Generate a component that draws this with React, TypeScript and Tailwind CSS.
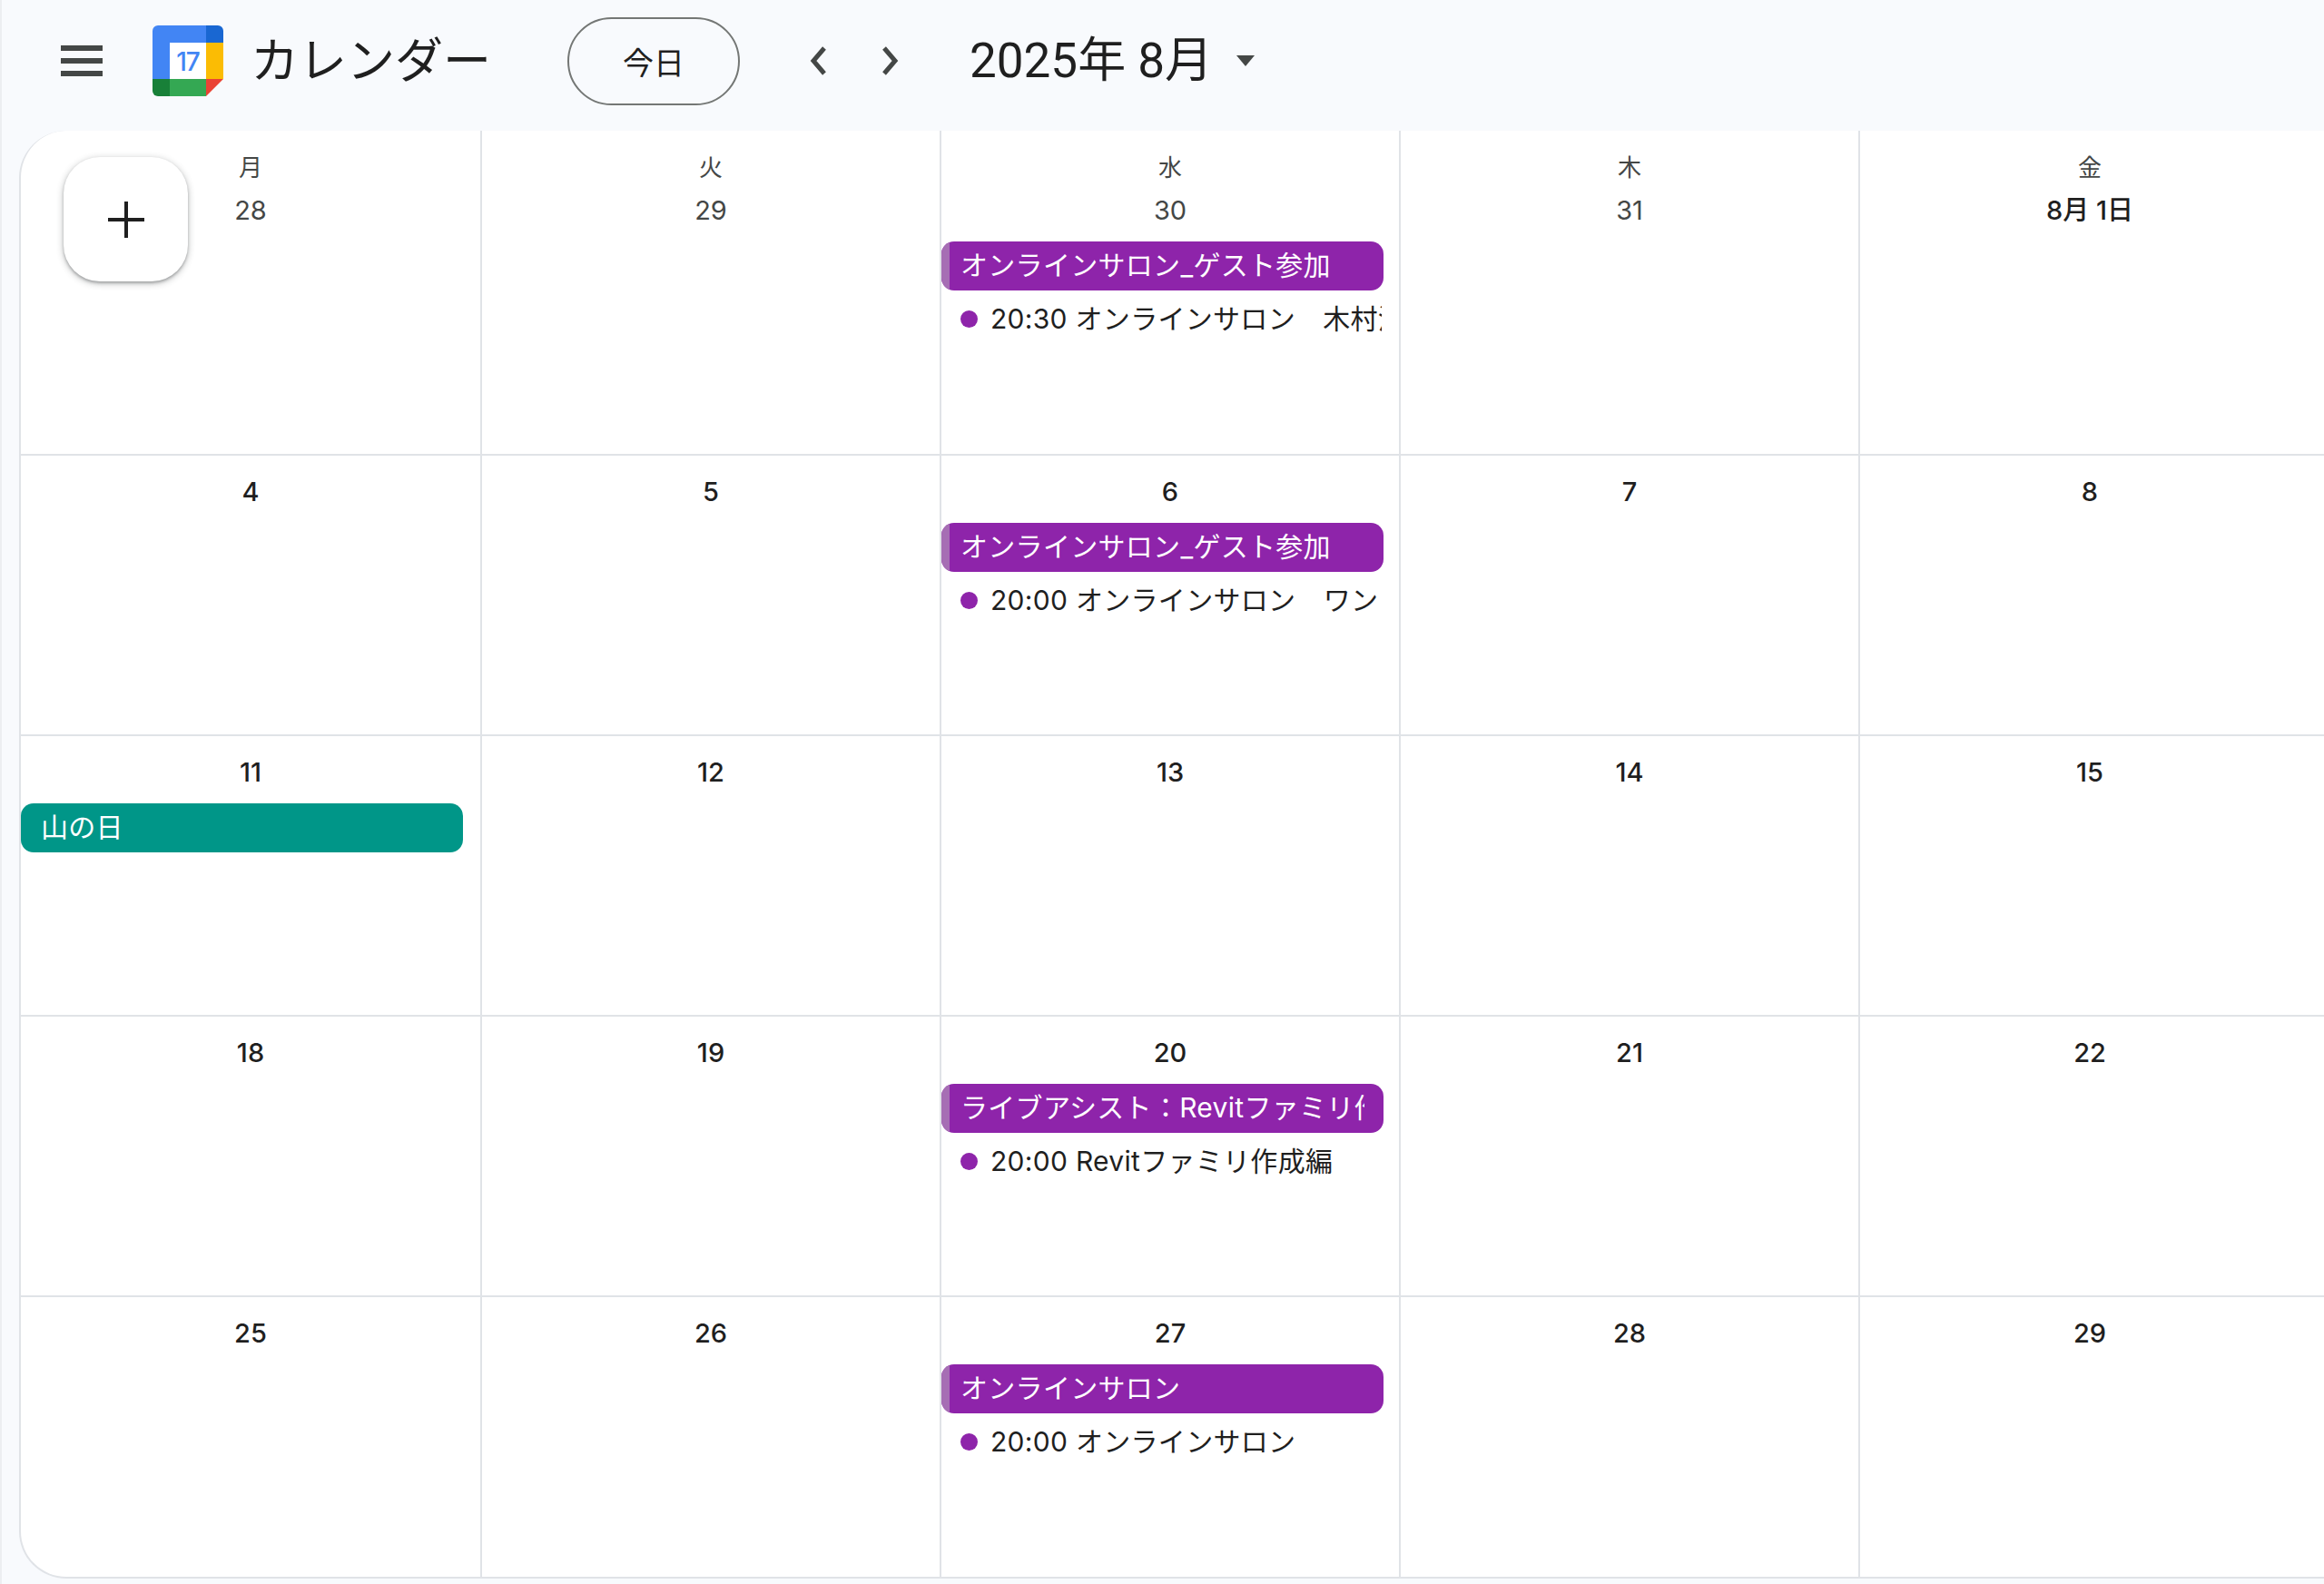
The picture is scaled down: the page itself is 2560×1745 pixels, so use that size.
const FONT = '"Inter", "Noto Sans CJK JP", sans-serif';

type Ev = { title: string; time?: string; color?: string };
type Cell = { d: string; head?: string; muted?: boolean; bold?: boolean; ev?: Ev };

const rows: Cell[][] = [
  [
    { d: '28', head: '月', muted: true },
    { d: '29', head: '火', muted: true },
    { d: '30', head: '水', muted: true, ev: { title: 'オンラインサロン_ゲスト参加', time: '20:30 オンラインサロン　木村流' } },
    { d: '31', head: '木', muted: true },
    { d: '8月 1日', head: '金', bold: true },
  ],
  [
    { d: '4' },
    { d: '5' },
    { d: '6', ev: { title: 'オンラインサロン_ゲスト参加', time: '20:00 オンラインサロン　ワン' } },
    { d: '7' },
    { d: '8' },
  ],
  [
    { d: '11', ev: { title: '山の日', color: 'teal' } },
    { d: '12' },
    { d: '13' },
    { d: '14' },
    { d: '15' },
  ],
  [
    { d: '18' },
    { d: '19' },
    { d: '20', ev: { title: 'ライブアシスト：Revitファミリ作成編', time: '20:00 Revitファミリ作成編' } },
    { d: '21' },
    { d: '22' },
  ],
  [
    { d: '25' },
    { d: '26' },
    { d: '27', ev: { title: 'オンラインサロン', time: '20:00 オンラインサロン' } },
    { d: '28' },
    { d: '29' },
  ],
];

function Logo() {
  return (
    <svg width="78" height="78" viewBox="0 0 78 78" className="shrink-0">
      <path d="M6 0H59V19H19V59H0V6A6 6 0 0 1 6 0Z" fill="#4285f4" />
      <path d="M59 0H72A6 6 0 0 1 78 6V19H59Z" fill="#1967d2" />
      <rect x="59" y="19" width="19" height="40" fill="#fbbc04" />
      <rect x="19" y="59" width="40" height="19" fill="#34a853" />
      <path d="M0 59H19V78H6A6 6 0 0 1 0 72Z" fill="#188038" />
      <path d="M59 59H78L59 78Z" fill="#ea4335" />
      <rect x="19" y="19" width="40" height="40" fill="#ffffff" />
      <text x="39" y="50" textAnchor="middle" fontSize="28" fontWeight="500" letterSpacing="-1" fill="#4285f4" fontFamily="Inter, sans-serif">17</text>
    </svg>
  );
}

function Header() {
  return (
    <header className="flex h-[144px] items-center pb-[10px] pl-[65px]">
      <div className="flex w-[46px] shrink-0 flex-col gap-[8px]">
        <div className="h-[6px] bg-[#444746]" />
        <div className="h-[6px] bg-[#444746]" />
        <div className="h-[6px] bg-[#444746]" />
      </div>
      <div className="ml-[55px]"><Logo /></div>
      <div className="ml-[30px] w-[270px] whitespace-nowrap text-[53px] leading-[64px] text-[#1f1f1f]">カレンダー</div>
      <div className="ml-[79px] flex h-[97px] w-[190px] shrink-0 items-center justify-center rounded-full border-2 border-[#747775] pt-[4px] text-[34px] text-[#1f1f1f]">今日</div>
      <svg width="24" height="36" viewBox="0 0 24 36" className="ml-[75px]">
        <polyline points="18,4 6,18 18,32" fill="none" stroke="#444746" strokeWidth="5" />
      </svg>
      <svg width="24" height="36" viewBox="0 0 24 36" className="ml-[54px]">
        <polyline points="6,4 18,18 6,32" fill="none" stroke="#444746" strokeWidth="5" />
      </svg>
      <div className="ml-[76px] whitespace-nowrap font-['Roboto','Noto_Sans_CJK_JP',sans-serif] text-[53px] leading-[64px] text-[#1f1f1f]">2025年 8月</div>
      <svg width="20" height="12" viewBox="0 0 20 12" className="ml-[26px]">
        <path d="M0 0H20L10 12Z" fill="#444746" />
      </svg>
    </header>
  );
}

function Event({ ev }: { ev: Ev }) {
  const teal = ev.color === 'teal';
  return (
    <div className="w-[487px] self-start">
      <div className={`flex h-[54px] items-center overflow-hidden rounded-[14px] pr-[21px] text-[30px] tracking-[0.3px] text-white ${teal ? 'bg-[#009688]' : 'bg-[#8e24aa]'}`}>
        {!teal && <div className="h-full w-[9px] shrink-0 bg-[#a66eb4]" />}
        <div className={`min-w-0 flex-1 pb-[2px] ${teal ? 'pl-[22px]' : 'pl-[12px]'}`}>
          <div className="overflow-hidden whitespace-nowrap">{ev.title}</div>
        </div>
      </div>
      {ev.time && (
        <div className="mt-[4px] flex h-[54px] items-center pl-[21px] pr-[2px]">
          <div className="h-[19px] w-[19px] shrink-0 rounded-full bg-[#8e24aa]" />
          <div className="ml-[14px] min-w-0 flex-1 overflow-hidden whitespace-nowrap text-[30px] tracking-[0.3px] text-[#1f1f1f]">{ev.time}</div>
        </div>
      )}
    </div>
  );
}

function DayCell({ cell, last }: { cell: Cell; last: boolean }) {
  const color = cell.muted ? 'text-[#444746]' : 'text-[#1f1f1f] font-medium';
  return (
    <div className={`flex min-w-0 flex-col items-center overflow-hidden ${cell.head ? 'pt-[24px]' : 'pt-[23px]'} ${last ? '' : 'border-r-2 border-[#e0e3e7]'}`}>
      {cell.head && <div className="h-[34px] text-[26px] leading-[34px] text-[#444746]">{cell.head}</div>}
      <div className={`h-[34px] whitespace-nowrap text-[29px] leading-[34px] ${color} ${cell.head ? 'mt-[13px]' : ''}`}>{cell.d}</div>
      {cell.ev && <div className="mt-[17px] w-full"><Event ev={cell.ev} /></div>}
    </div>
  );
}

export default function App() {
  return (
    <div className="relative h-[1745px] w-[2560px] overflow-hidden border-l-2 border-[#eceef1] bg-[#f8fafd]" style={{ fontFamily: FONT }}>
      <Header />
      <main className="ml-[19px] h-[1595px] overflow-hidden rounded-l-[52px] border-b-2 border-l-2 border-[#e0e3e7] bg-white">
        {rows.map((row, i) => (
          <div
            key={i}
            className={`grid grid-cols-[508px_506px_506px_506px_506px] ${i === 0 ? 'h-[358px]' : 'h-[309px]'} ${i < rows.length - 1 ? 'border-b-2 border-[#e0e3e7]' : ''}`}
          >
            {row.map((cell, j) => (
              <DayCell key={j} cell={cell} last={j === 4} />
            ))}
          </div>
        ))}
      </main>
      <button className="absolute left-[68px] top-[173px] flex h-[137px] w-[137px] items-center justify-center rounded-[40px] bg-white shadow-[0_2px_6px_2px_rgba(60,64,67,0.2),0_2px_3px_rgba(60,64,67,0.35)]">
        <svg width="42" height="42" viewBox="0 0 42 42">
          <path d="M19 1H23V19H41V23H23V41H19V23H1V19H19Z" fill="#1f1f1f" />
        </svg>
      </button>
    </div>
  );
}
